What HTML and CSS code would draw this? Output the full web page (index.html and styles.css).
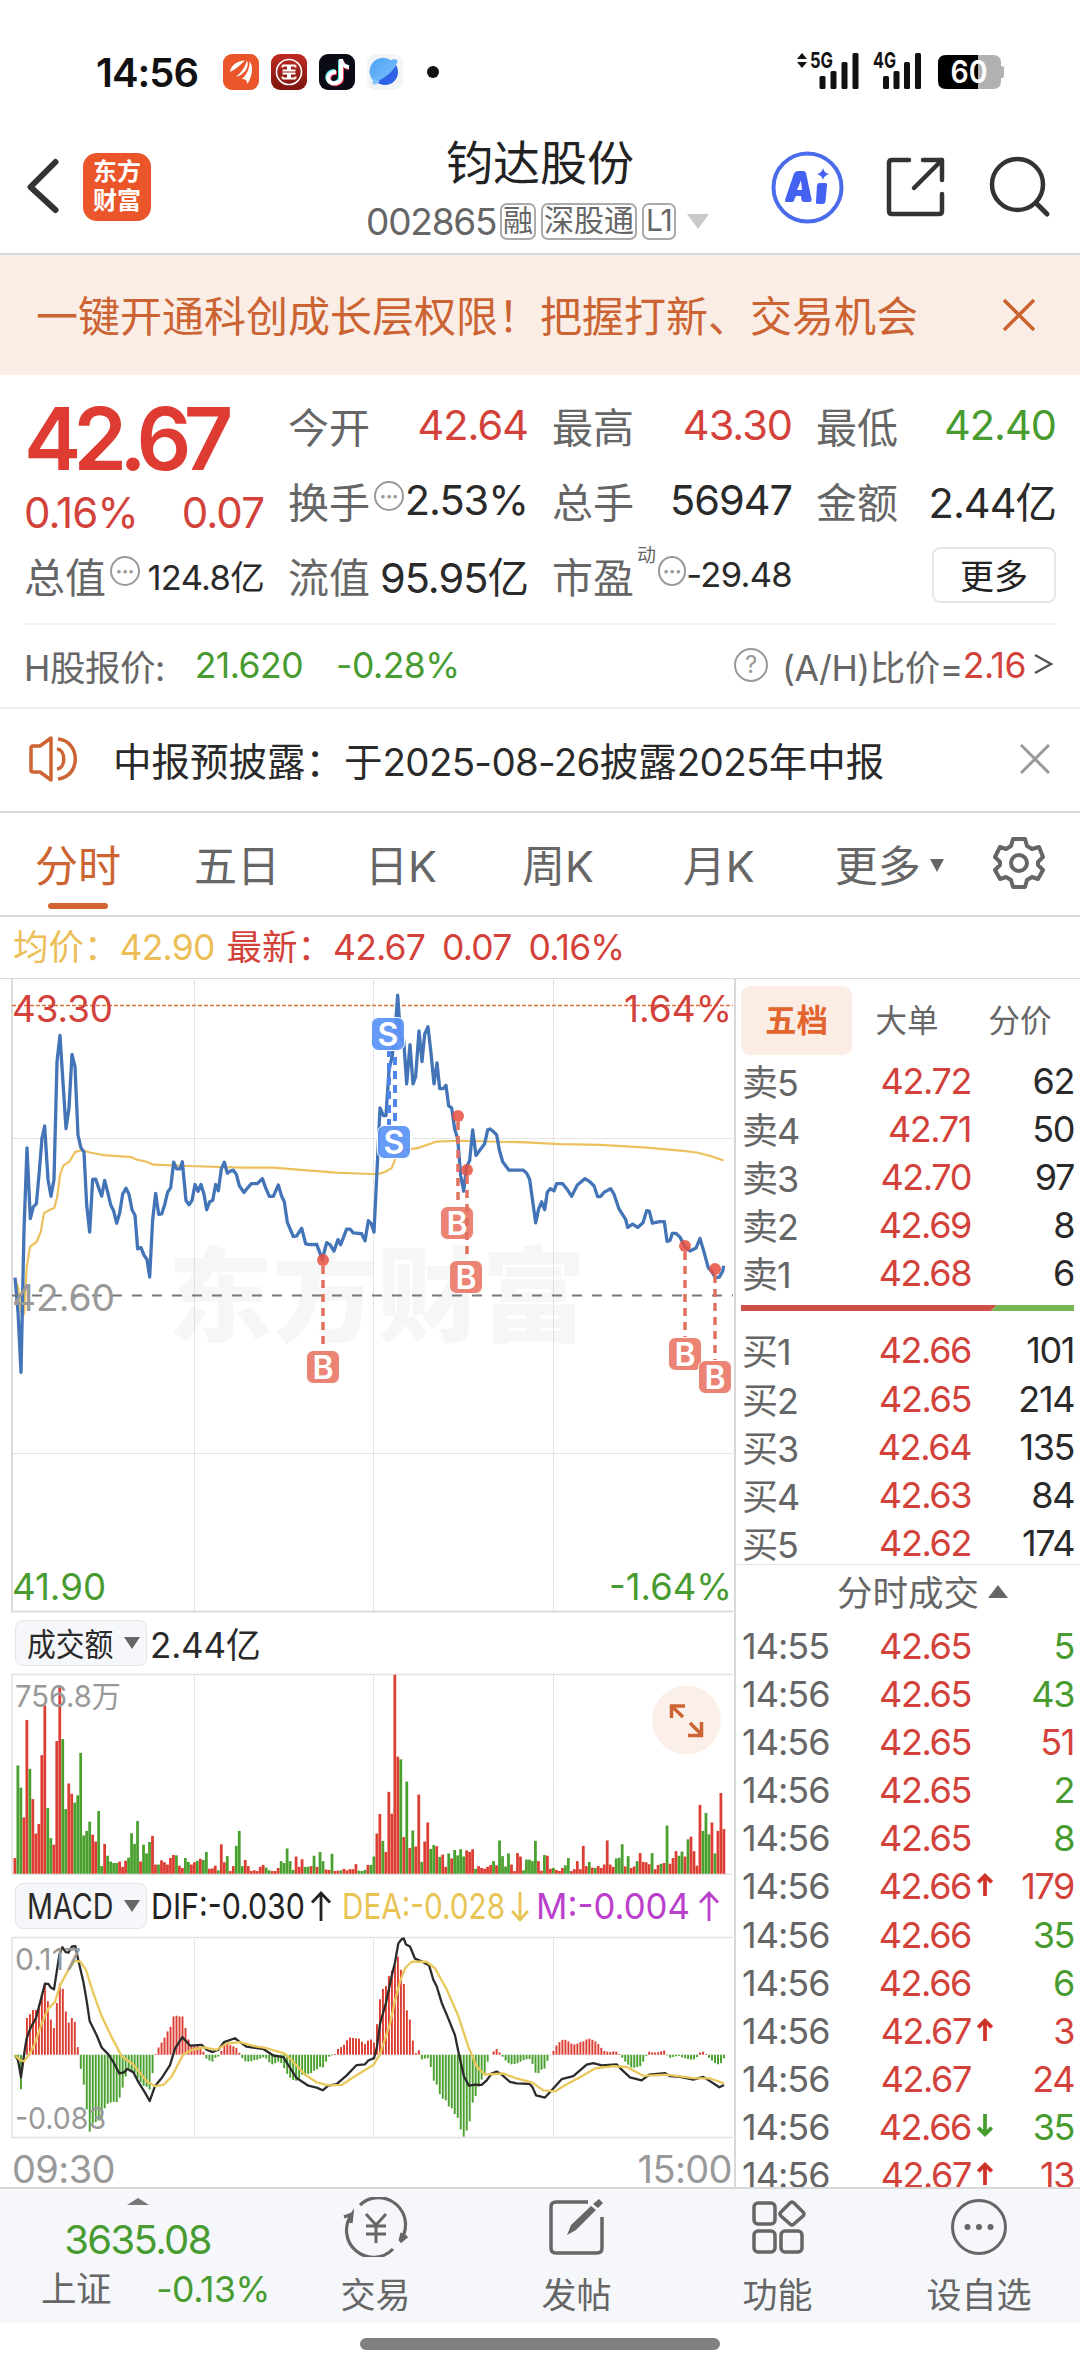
FILE: index.html
```html
<!DOCTYPE html>
<html lang="zh-CN">
<head>
<meta charset="UTF-8">
<title>钧达股份 002865</title>
<link rel="stylesheet" href="styles.css">
</head>
<body>

<div class="status">
  <span class="clock">14:56</span>
  <svg class="apps" width="224" height="36" viewBox="0 0 224 36">
    <defs>
      <linearGradient id="icbc" x1="0" y1="0" x2="0" y2="1"><stop offset="0" stop-color="#c02a22"/><stop offset="1" stop-color="#7c150f"/></linearGradient>
      <linearGradient id="planet" x1="0" y1="0" x2="1" y2="1"><stop offset="0" stop-color="#4aa3f5"/><stop offset="1" stop-color="#7fc0fb"/></linearGradient>
    </defs>
    <rect width="36" height="36" rx="9" fill="#ea552a"/>
    <path d="M7 18C8 11 14 7 22 6.500C18 10 15 14 7 18ZM13 23C19 18 22 13 24 6.500C27 13 21 21 13 23ZM19 25C25 19 27 13 26.500 7C31 13 29 22 24.500 30C24 26 22 25 19 25Z" fill="#fff"/>
    <rect x="48" width="36" height="36" rx="9" fill="url(#icbc)"/>
    <circle cx="66" cy="18" r="12.500" fill="none" stroke="#fff" stroke-width="1.600"/>
    <path d="M59.500 11.500H65V16.500H59.500M72.500 11.500H67V16.500H72.500M59.500 24.500H65V19.500H59.500M72.500 24.500H67V19.500H72.500M59.500 11.500V13.500M72.500 11.500V13.500M59.500 24.500V22.500M72.500 24.500V22.500" fill="none" stroke="#fff" stroke-width="2"/>
    <rect x="96" width="36" height="36" rx="9" fill="#0b0b15"/>
    <g fill="none" stroke-width="4">
      <path d="M112 17C105 17 103 22 105 26C108 31 117 29 117 23V6C118 10 121 12 125 13" stroke="#4be3e6"/>
      <path d="M114 19C107 18 105 24 107 28C111 32 119 30 119 24V7C120 11 123 14 126 14" stroke="#f0385a"/>
      <path d="M113 18C106 18 104 23 106 27C109 31 118 29.500 118 23.500V5C118 10 122 13 126 13" stroke="#fff"/>
    </g>
    <rect x="144" width="36" height="36" rx="9" fill="#f3f4f6"/>
    <circle cx="162" cy="18" r="13" fill="#2f62e6"/>
    <path d="M152 28A13 13 0 0 1 168 6.500C171 4 176 5 174 9C171 17 161 25 152 28Z" fill="url(#planet)"/>
    <path d="M151 25C148 28 149 32 154 30L157 27Z" fill="#7fc4fb"/>
    <circle cx="210" cy="18" r="6" fill="#111"/>
  </svg>
  <svg class="signals" width="210" height="38" viewBox="0 0 210 38">
    <path d="M0 7L5 1L10 7ZM0 10H10L5 16Z" fill="#111"/>
    <text x="13" y="16" class="net" textLength="23" lengthAdjust="spacingAndGlyphs">5G</text>
    <text x="76" y="16" class="net" textLength="23" lengthAdjust="spacingAndGlyphs">4G</text>
    <g fill="#111">
      <rect x="22.500" y="24" width="6" height="13" rx="1.500"/><rect x="33.500" y="19" width="6" height="18" rx="1.500"/><rect x="44.500" y="10" width="6" height="27" rx="1.500"/><rect x="55.500" y="1" width="6" height="36" rx="1.500"/>
      <rect x="86" y="24" width="6" height="13" rx="1.500"/><rect x="96.500" y="19" width="6" height="18" rx="1.500"/><rect x="107" y="10" width="6" height="27" rx="1.500"/><rect x="118" y="1" width="6" height="36" rx="1.500"/>
    </g>
    <path d="M181 3H196Q204 3 204 11V14Q207 14 207 16V24Q207 26 204 26V29Q204 37 196 37H181Z" fill="#b1b1b1"/>
    <path d="M149 3H181V37H149Q141 37 141 29V11Q141 3 149 3Z" fill="#000"/>
    <text x="153.500" y="30.500" class="batt" textLength="37" lengthAdjust="spacingAndGlyphs">60</text>
  </svg>
</div>

<header class="top">
  <svg class="back" width="34" height="58" viewBox="0 0 34 58"><path d="M29.500 4L4.500 29L29.500 52" fill="none" stroke="#333" stroke-width="6" stroke-linecap="round" stroke-linejoin="round"/></svg>
  <div class="logo">东方<br>财富</div>
  <div class="stock">
    <div class="name">钧达股份</div>
    <div class="code"><span class="num">002865</span><i>融</i><i>深股通</i><i class="l1">L1</i><b class="drop"></b></div>
  </div>
  <svg class="tools" width="284" height="76" viewBox="0 0 284 76">
    <circle cx="37.500" cy="37.500" r="34" fill="none" stroke="#4a6bea" stroke-width="4"/>
    <path d="M15 50Q14.500 52 17 52H22Q24 52 24.500 49L26 46H31L31.500 50Q32 52 34 52H39Q42 52 41.500 49L36 23Q35.500 21 33 21H28Q25 21 24 23.500ZM27 40L31 30.500L32 40ZM49 33H55Q57.500 33 57 35.500L55.500 51Q55 54 53 54H48Q45.500 54 46 51.500L47 35.500Q47.500 33 49 33ZM53 18Q54 23 59 24Q54 25.500 53 30Q52 25.500 47 24Q52 23 53 18Z" fill="#4461f2"/>
    <path d="M139 10H122Q119 10 119 13V61Q119 64 122 64H169Q172 64 172 61V44M153 10H172V30M172 10L144 38" fill="none" stroke="#333" stroke-width="4.500" stroke-linecap="round" stroke-linejoin="round"/>
    <circle cx="247.500" cy="34.500" r="25.500" fill="none" stroke="#333" stroke-width="4.500"/>
    <path d="M266 53L277 64" stroke="#333" stroke-width="5" stroke-linecap="round"/>
  </svg>
</header>

<div class="banner">
  <span>一键开通科创成长层权限！把握打新、交易机会</span>
  <svg width="32" height="32" viewBox="0 0 32 32"><path d="M1 1L31 31M31 1L1 31" stroke="#cb6332" stroke-width="3.500"/></svg>
</div>

<section class="quote">
  <div class="cell lead">
    <div class="price">42.67</div>
    <div class="chg red"><span>0.16%</span><span>0.07</span></div>
  </div>
  <div class="cell"><em>今开</em><span class="v red">42.64</span></div>
  <div class="cell"><em>最高</em><span class="v red">43.30</span></div>
  <div class="cell"><em>最低</em><span class="v green">42.40</span></div>
  <div class="cell"><em>换手</em><i class="info">•••</i><span class="v">2.53%</span></div>
  <div class="cell"><em>总手</em><span class="v">56947</span></div>
  <div class="cell"><em>金额</em><span class="v">2.44亿</span></div>
  <div class="cell"><em>总值</em><i class="info">•••</i><span class="v sm">124.8亿</span></div>
  <div class="cell"><em>流值</em><span class="v">95.95亿</span></div>
  <div class="cell"><em>市盈</em><sup>动</sup><i class="info">•••</i><span class="v sm">-29.48</span></div>
  <div class="cell"><button class="more">更多</button></div>
</section>

<div class="hk">
  <span>H股报价:</span><span class="green hkp">21.620</span><span class="green hkc">-0.28%</span>
  <span class="ah"><i class="q">?</i>(A/H)比价=<span class="red">2.16</span><svg width="20" height="24" viewBox="0 0 20 24"><path d="M1 2L17 11L1 20" fill="none" stroke="#555" stroke-width="2.500"/></svg></span>
</div>

<div class="notice">
  <svg width="52" height="46" viewBox="0 0 52 46" fill="none" stroke="#cd6433" stroke-width="3.500" stroke-linejoin="round">
    <path d="M3 12Q3 10 5 10H12L23 2V44L12 36H5Q3 36 3 34Z"/><path d="M29 13C38 14 38 32 29 33M30 3C53 5 53 41 30 43"/>
  </svg>
  <span class="msg">中报预披露：于<b>2025-08-26</b>披露<b>2025</b>年中报</span>
  <svg width="30" height="30" viewBox="0 0 30 30"><path d="M1 1L29 29M29 1L1 29" stroke="#999" stroke-width="3"/></svg>
</div>

<nav class="tabs">
  <a class="on">分时</a><a>五日</a><a>日K</a><a>周K</a><a>月K</a><a>更多<b></b></a>
  <svg width="52" height="54" viewBox="0 0 52 54" fill="none" stroke="#666" stroke-width="4" stroke-linejoin="round">
    <path d="M20 3H32L34 10L39 13L46 11L50 21L45 26V29L50 34L45 43L39 41L34 44L32 51H20L18 44L13 41L7 43L2 34L7 29V26L2 21L7 11L13 13L18 10Z"/><circle cx="26" cy="27" r="8"/>
  </svg>
</nav>

<div class="avg"><span class="yellow">均价：<b>42.90</b></span><span class="red">最新：<b>42.67</b><b>0.07</b><b>0.16%</b></span></div>

<main>
  <div class="charts">
    <svg class="plot" width="735" height="634" viewBox="0 0 735 634">
      <text x="168" y="355" class="mark" textLength="418" lengthAdjust="spacingAndGlyphs">东方财富</text>
      <path d="M194.500 1V632M373.500 1V632M553.500 1V632M12 159.500H733M12 474.500H733" class="dots"/>
      <path d="M12 0V632.500H733" class="frame"/>
      <path d="M12 26.500H733" stroke="#d9703f" stroke-width="1.500" stroke-dasharray="4 2"/>
      <g transform="translate(0 -10) scale(.33333 .42091)" class="series">
        <polyline class="mean" points="45,735 54,755 63,815 72,820 80,710 90,660 110,648 122,625 132,580 150,572 163,568 172,540 180,490 190,467 208,458 225,435 245,430 270,436 310,442 395,447 410,453 440,458 460,465 560,468 730,472 820,472 930,479 1010,484 1110,487 1140,486 1155,482 1175,473 1192,440 1210,431 1255,425 1310,410 1380,408 1580,412 1680,416 1800,418 1930,424 2050,432 2090,436 2130,444 2171,455"/>
        <polyline class="last" points="45,733 54,815 63,958 72,620 81,425 91,593 100,565 109,558 118,480 126,402 134,373 144,500 153,540 162,500 171,220 180,158 189,270 198,379 207,330 216,203 225,232 234,395 243,425 252,435 260,560 269,625 278,500 287,499 296,520 305,540 314,502 323,530 332,560 341,575 350,604 359,580 368,535 378,521 387,535 396,572 405,585 413,665 423,662 432,680 441,690 449,732 458,595 467,533 476,583 485,582 494,560 503,530 512,520 521,459 530,475 540,475 547,458 558,550 567,560 576,550 585,512 594,528 603,512 612,535 620,572 629,553 638,550 647,512 655,527 664,475 673,459 682,485 691,480 700,478 709,488 718,515 732,531 745,518 754,510 772,510 787,498 797,520 808,540 820,540 835,513 845,540 853,553 862,602 880,636 890,634 905,616 917,653 930,655 950,654 967,690 980,650 990,655 1002,670 1014,643 1022,655 1040,618 1050,618 1060,627 1085,629 1095,646 1105,598 1114,605 1122,625 1131,480 1140,330 1150,348 1158,348 1167,240 1177,205 1185,150 1193,62 1202,165 1211,168 1220,273 1230,180 1239,273 1247,255 1257,147 1266,220 1274,155 1284,137 1293,200 1302,273 1311,223 1319,284 1330,284 1338,276 1346,325 1355,330 1364,380 1373,403 1382,490 1391,528 1400,470 1409,455 1418,382 1428,443 1440,430 1454,415 1463,382 1470,380 1480,386 1490,394 1498,430 1508,458 1527,478 1570,478 1580,485 1589,500 1607,603 1616,570 1625,553 1634,572 1642,530 1651,522 1662,527 1670,510 1688,510 1700,522 1715,540 1732,513 1755,498 1770,506 1782,515 1793,541 1802,540 1813,530 1832,522 1842,535 1857,570 1877,595 1883,614 1898,606 1913,614 1929,603 1940,574 1948,575 1957,604 1980,600 1993,600 2001,647 2010,645 2017,628 2028,628 2040,637 2055,660 2070,670 2088,663 2100,640 2113,675 2125,710 2135,718 2146,734 2158,732 2168,718 2171,705"/>
      </g>
      <path d="M12 316.500H733" stroke="#777" stroke-width="2" stroke-dasharray="10 10"/>
      <g id="trades"></g>
      <text x="12" y="43" class="ax red" textLength="101" lengthAdjust="spacingAndGlyphs">43.30</text>
      <text x="12" y="332" class="ax gray" textLength="103" lengthAdjust="spacingAndGlyphs">42.60</text>
      <text x="12" y="621" class="ax green" textLength="94" lengthAdjust="spacingAndGlyphs">41.90</text>
      <text x="624" y="43" class="ax red" textLength="108" lengthAdjust="spacingAndGlyphs">1.64%</text>
      <text x="609" y="621" class="ax green" textLength="123" lengthAdjust="spacingAndGlyphs">-1.64%</text>
    </svg>

    <div class="ind"><span class="pick"><s>成交额</s><b></b></span><span class="amt">2.44亿</span></div>

    <svg class="plot" width="735" height="202" viewBox="0 0 735 202">
      <path d="M194.500 1V201M373.500 1V201M553.500 1V201" class="dots"/>
      <path d="M733 1.500H12V201.500H733" class="thin"/>
      <g id="volume" transform="translate(0 -74) scale(.33333 .38265)"></g>
      <text x="15" y="34" class="lab" textLength="106" lengthAdjust="spacingAndGlyphs">756.8万</text>
      <circle cx="686.500" cy="47" r="34.500" fill="#fbf0e9"/>
      <path d="M671.500 45V33H685M672 33.500L683 44M690 50L701 61M688 62.500H701.500V49" fill="none" stroke="#cd6433" stroke-width="3.500"/>
    </svg>

    <div class="ind macd">
      <span class="pick"><s class="en">MACD</s><b></b></span>
      <svg width="580" height="46" viewBox="0 0 580 46">
        <g class="val">
          <text x="4" y="36" fill="#222" textLength="154" lengthAdjust="spacingAndGlyphs">DIF:-0.030</text>
          <text x="195" y="36" fill="#e8c454" textLength="163" lengthAdjust="spacingAndGlyphs">DEA:-0.028</text>
          <text x="389" y="36" fill="#ba40cb" textLength="154" lengthAdjust="spacingAndGlyphs">M:-0.004</text>
        </g>
        <g fill="none" stroke-width="2.800">
          <path d="M174 38V10M165 19.500L174 10L183 19.500" stroke="#222"/>
          <path d="M373 9V37M365 28L373 37L381 28" stroke="#e8c454"/>
          <path d="M562 38V10M553 19.500L562 10L571 19.500" stroke="#ba40cb"/>
        </g>
      </svg>
    </div>

    <svg class="plot" width="735" height="203" viewBox="0 0 735 203">
      <path d="M194.500 1V201M373.500 1V201M553.500 1V201" class="dots"/>
      <path d="M733 1.500H12V201.500H733" class="thin"/>
      <g transform="translate(0 -337) scale(.33333 .38265)" class="series">
        <g id="hist"></g>
        <polyline class="dif" points="45,1192 54,1205 63,1250 74,1180 80,1148 92,1120 108,1095 120,1055 135,1005 145,1006 152,1015 162,1020 170,975 178,930 187,910 197,923 206,924 216,908 226,907 234,940 250,1000 260,1050 269,1103 290,1140 305,1172 325,1190 340,1210 358,1240 372,1237 382,1228 400,1237 415,1262 435,1290 449,1312 465,1273 485,1252 510,1218 525,1175 547,1145 570,1167 605,1165 620,1178 638,1184 655,1178 672,1158 705,1148 720,1158 740,1170 790,1176 820,1193 850,1197 870,1225 890,1252 925,1272 950,1277 968,1284 985,1272 1010,1268 1040,1245 1070,1218 1095,1216 1105,1206 1122,1200 1131,1170 1140,1110 1158,1055 1175,985 1185,950 1195,900 1205,889 1211,887 1218,903 1230,908 1245,940 1265,947 1287,957 1300,995 1310,1012 1325,1055 1342,1090 1365,1140 1378,1195 1392,1248 1407,1272 1425,1269 1445,1270 1460,1258 1475,1240 1490,1235 1505,1243 1530,1262 1550,1266 1588,1267 1597,1275 1608,1297 1635,1303 1655,1284 1685,1255 1720,1247 1760,1217 1780,1213 1805,1219 1850,1216 1865,1230 1890,1250 1925,1258 1948,1243 1995,1239 2010,1247 2040,1249 2080,1256 2110,1249 2130,1260 2158,1276 2172,1270"/>
        <polyline class="dea" points="45,1192 60,1205 72,1208 90,1188 105,1160 125,1110 145,1070 165,1053 180,1010 205,970 225,945 242,948 258,970 280,1030 305,1090 335,1145 365,1195 400,1217 440,1260 465,1273 490,1270 515,1248 550,1190 575,1179 610,1172 650,1178 680,1162 720,1158 760,1168 800,1174 855,1188 880,1210 915,1243 950,1263 985,1271 1025,1270 1060,1250 1120,1218 1140,1190 1170,1110 1185,1050 1200,1000 1215,965 1235,948 1280,948 1305,965 1340,1020 1375,1090 1405,1170 1430,1222 1455,1243 1510,1240 1550,1253 1595,1263 1630,1284 1665,1287 1700,1268 1740,1250 1785,1227 1840,1221 1880,1223 1930,1246 2000,1243 2080,1252 2130,1253 2172,1266"/>
      </g>
      <text x="15" y="34" class="lab" textLength="66" lengthAdjust="spacingAndGlyphs">0.117</text>
      <text x="15" y="193" class="lab" textLength="91" lengthAdjust="spacingAndGlyphs">-0.083</text>
    </svg>

    <div class="times"><span>09:30</span><span>15:00</span></div>
  </div>

  <aside class="book">
    <div class="seg"><b>五档</b><span>大单</span><span>分价</span></div>
    <div id="asks"></div>
    <svg class="ratio" width="333" height="6" viewBox="0 0 333 6"><path d="M0 0H256L250 6H0Z" fill="#cf5046"/><path d="M256 0H333V6H250Z" fill="#76b657"/></svg>
    <div id="bids"></div>
    <div class="ticks-h">分时成交<b></b></div>
    <div id="ticks"></div>
  </aside>
</main>

<footer class="bar">
  <div class="index"><b class="up"></b><div class="green pt">3635.08</div><div class="ix"><span>上证</span><span class="green">-0.13%</span></div></div>
  <div class="item">
    <svg width="66" height="60" viewBox="0 0 66 60" fill="none" stroke="#666" stroke-width="3.200">
      <path d="M17 8A27 27 0 0 1 57 44L59 36M57 45L64 39M50 52A27 27 0 0 1 9 17L8 26M9 17L1 20"/><path d="M23 17L33 28L43 17M33 28V46M23 29H43M23 37H43" stroke-width="3"/>
    </svg>交易</div>
  <div class="item">
    <svg width="60" height="60" viewBox="0 0 60 60" fill="none" stroke="#666" stroke-width="3.500">
      <path d="M41 5H9Q4 5 4 10V51Q4 56 9 56H50Q55 56 55 51V20"/><path d="M20 38L24 28L44 9L49 13L29 33ZM46 7L52 2L56 6L51 11Z" fill="#666" stroke="none"/>
    </svg>发帖</div>
  <div class="item">
    <svg width="56" height="60" viewBox="0 0 56 60" fill="none" stroke="#666" stroke-width="3.500">
      <rect x="4" y="6" width="21" height="21" rx="4"/><rect x="4" y="34" width="21" height="21" rx="4"/><rect x="31" y="34" width="21" height="21" rx="4"/><path d="M40 6Q42 4 44 6L53 15Q55 17 53 19L44 27Q42 29 40 27L31 19Q29 17 31 15Z"/>
    </svg>功能</div>
  <div class="item">
    <svg width="60" height="60" viewBox="0 0 60 60"><circle cx="30" cy="30" r="26.500" fill="none" stroke="#666" stroke-width="3"/><g fill="#666"><circle cx="18.500" cy="30" r="3"/><circle cx="30" cy="30" r="3"/><circle cx="41.500" cy="30" r="3"/></g></svg>设自选</div>
</footer>
<div class="home"></div>

<script src="chart.js"></script>
</body>
</html>
```
FILE: styles.css
```css
* {
    box-sizing: border-box;
}
body {
    margin: 0;
    width: 1080px;
    height: 2373px;
    overflow: hidden;
    background: #fff;
    color: #2a2a2a;
    font-family: "Inter", "Noto Sans CJK SC", sans-serif;
    font-size: 36px;
}
i, em, s {
    font-style: normal;
    text-decoration: none;
}
b {
    font-weight: 400;
}
.red { color: #d3423a; }
.green { color: #489b30; }
.yellow { color: #ecbe57; }

/* system status bar */
.status {
    height: 144px;
    padding: 0 73px 0 96px;
    display: flex;
    align-items: center;
}
.clock {
    width: 127px;
    font-size: 40px;
    font-weight: 600;
    letter-spacing: -1px;
    color: #111;
}
.signals {
    margin-left: auto;
    margin-top: -2px;
    overflow: visible;
}
.net {
    font-size: 22px;
    font-weight: 700;
    fill: #111;
}
.batt {
    font-size: 31px;
    font-weight: 600;
    fill: #fff;
}

/* title bar */
.top {
    height: 111px;
    display: flex;
    align-items: flex-start;
    border-bottom: 2px solid #d8d8d8;
    padding-left: 26px;
}
.back {
    margin-top: 14px;
}
.logo {
    width: 68px;
    height: 68px;
    margin: 9px 0 0 23px;
    padding-top: 4px;
    border-radius: 14px;
    background: #ea552a;
    color: #fff;
    font-size: 24px;
    font-weight: 700;
    line-height: 29px;
    text-align: center;
}
.stock {
    width: 360px;
    margin-left: 209px;
    text-align: center;
}
.name {
    height: 56px;
    margin-top: -9px;
    line-height: 56px;
    font-size: 47px;
    color: #222;
}
.code {
    display: flex;
    align-items: center;
    height: 38px;
    margin-top: 11px;
    padding-left: 6px;
    color: #666;
}
.code .num {
    width: 134px;
    font-size: 37px;
    letter-spacing: -1.2px;
    text-align: left;
}
.code i {
    height: 37px;
    margin-right: 5px;
    padding: 0 1px;
    border: 2px solid #aaa;
    border-radius: 7px;
    font-size: 30px;
    line-height: 31px;
}
.code .l1 {
    letter-spacing: -1px;
    padding: 0 2px;
}
.drop {
    margin-left: 6px;
    border: 11px solid transparent;
    border-top: 15px solid #c9c9c9;
    border-bottom: 0;
}
.tools {
    margin-left: 50px;
    margin-top: 6px;
}

.banner {
    height: 120px;
    padding: 0 45px 0 36px;
    display: flex;
    align-items: center;
    justify-content: space-between;
    background: #faede5;
    color: #cb6332;
    font-size: 42px;
}
.banner span {
    padding-bottom: 3px;
}

/* quote numbers */
.quote {
    display: grid;
    grid-template-columns: 240px 240px 240px 240px;
    grid-template-rows: 75px 75px 75px;
    column-gap: 24px;
    height: 250px;
    margin: 0 24px;
    padding-top: 12px;
    border-bottom: 2px solid #f2f2f2;
}
.cell {
    display: flex;
    align-items: center;
    white-space: nowrap;
}
.cell em {
    font-size: 41px;
    color: #666;
}
.cell .v {
    margin-left: auto;
    font-size: 41.5px;
    letter-spacing: -1px;
}
.cell .sm {
    font-size: 34.5px;
    letter-spacing: -.7px;
}
.lead {
    grid-row: span 2;
    display: block;
    padding-top: 2px;
}
.price {
    height: 100px;
    line-height: 100px;
    font-size: 86px;
    font-weight: 600;
    letter-spacing: -7.8px;
    color: #de3b32;
}
.chg {
    display: flex;
    justify-content: space-between;
    line-height: 48px;
    font-size: 42px;
    letter-spacing: -.9px;
}
.info, .q {
    width: 30px;
    height: 30px;
    margin-left: 4px;
    margin-top: -8px;
    border: 2px solid #999;
    border-radius: 50%;
    color: #999;
    font-size: 11px;
    line-height: 26px;
    text-align: center;
}
.cell sup {
    font-size: 19px;
    margin: -38px -2px 0 3px;
    color: #666;
    line-height: 20px;
}
.more {
    margin-left: auto;
    width: 124px;
    height: 56px;
    padding: 0;
    background: #fff;
    border: 2px solid #e6e6e6;
    border-radius: 8px;
    font: 34px/48px "Noto Sans CJK SC", sans-serif;
    color: #222;
}

.hk {
    height: 84px;
    padding: 0 26px 2px 24px;
    display: flex;
    align-items: center;
    border-bottom: 2px solid #eee;
    font-size: 35.5px;
    letter-spacing: -.5px;
    color: #666;
}
.hkp { margin-left: 30px; }
.hkc { margin-left: 33px; }
.ah {
    display: flex;
    align-items: center;
    margin-left: auto;
}
.ah svg {
    margin-left: 8px;
}
.q {
    width: 34px;
    height: 34px;
    margin: 0 14px 0 0;
    font-size: 24px;
    line-height: 30px;
}

.notice {
    height: 104px;
    padding: 0 30px 2px 28px;
    display: flex;
    align-items: center;
    border-bottom: 2px solid #d8d8d8;
    font-size: 38.5px;
}
.msg {
    margin-left: 33px;
    margin-right: auto;
}
.msg b {
    letter-spacing: -.7px;
}

/* period tabs */
.tabs {
    height: 104px;
    padding: 0 35px 0 35px;
    display: flex;
    align-items: center;
    border-bottom: 2px solid #d8d8d8;
    font-size: 43px;
    color: #666;
}
.tabs a {
    height: 102px;
    line-height: 106px;
    margin-right: 73px;
    white-space: nowrap;
}
.tabs a:nth-child(2), .tabs a:nth-child(3) {
    margin-right: 85px;
}
.tabs a:nth-child(4) {
    margin-right: 89px;
}
.tabs a:nth-child(5) {
    margin-right: 80px;
}
.tabs .on {
    color: #cd6433;
}
.tabs .on::after {
    content: "";
    display: block;
    width: 60px;
    height: 6px;
    margin: -16px auto 0;
    border-radius: 3px;
    background: #d2622f;
}
.tabs a b {
    display: inline-block;
    margin-left: 9px;
    vertical-align: 10px;
    border: 7px solid transparent;
    border-top: 13px solid #666;
    border-bottom: 0;
}
.tabs a:nth-child(6) {
    margin-right: 0;
}
.tabs svg {
    margin-left: auto;
    margin-top: -3px;
}

.avg {
    height: 62px;
    padding-left: 13px;
    border-bottom: 1px solid #d8d8d8;
    line-height: 62px;
    font-size: 35.5px;
}
.avg b {
    letter-spacing: -.8px;
    margin-right: 17px;
}
.avg .yellow b {
    margin-right: 12px;
}

main {
    display: grid;
    grid-template-columns: 734px 346px;
    height: 1208px;
    overflow: hidden;
}

/* charts */
.charts {
    overflow: hidden;
}
.plot {
    display: block;
}
.frame { fill: none; stroke: #dcdcdc; stroke-width: 2; }
.thin { fill: none; stroke: #e2e2e2; stroke-width: 1.5; }
.dots { fill: none; stroke: #d2d2d2; stroke-width: 1; stroke-dasharray: 1.5 1; }
.mark { font-size: 103px; font-weight: 900; fill: #f6f6f6; }
.series polyline {
    fill: none;
    stroke-linejoin: round;
    vector-effect: non-scaling-stroke;
}
.last { stroke: #4374b7; stroke-width: 3.3; }
.mean { stroke: #ecc15d; stroke-width: 2.2; }
.dif { stroke: #2b2b2b; stroke-width: 2.3; }
.dea { stroke: #e9c75a; stroke-width: 2.3; }
.ax { font-size: 37px; }
.ax.red { fill: #d3423a; }
.ax.green { fill: #489b30; }
.ax.gray { fill: #999; }
.lab { font-size: 30px; fill: #999; }
.tag { font-size: 32px; font-weight: 600; fill: #fff; text-anchor: middle; }
.val { font-size: 36px; }

.ind {
    display: flex;
    align-items: center;
    height: 60px;
    padding-left: 15px;
}
.ind.macd {
    height: 61px;
}
.pick {
    width: 132px;
    height: 46px;
    padding-left: 11px;
    display: flex;
    align-items: center;
    border: 1px solid #e3e5e8;
    border-radius: 8px;
    background: #f6f7fa;
}
.pick s {
    width: 97px;
    margin-top: -2px;
    font-size: 32px;
    white-space: nowrap;
    transform: scaleX(.9);
    transform-origin: left;
}
.pick .en {
    margin-top: 0;
    font-size: 35px;
    transform: scaleX(.82);
}
.pick b {
    border: 8px solid transparent;
    border-top: 12px solid #666;
    border-bottom: 0;
}
.amt {
    margin: -2px 0 0 3px;
    font-size: 35px;
    letter-spacing: -.2px;
}
.times {
    height: 50px;
    padding: 2px 2px 0 12px;
    display: flex;
    justify-content: space-between;
    line-height: 56px;
    font-size: 38px;
    letter-spacing: -.6px;
    color: #999;
}

/* order book */
.book {
    border-left: 2px solid #d8d8d8;
    background: #fff;
    overflow: hidden;
}
.seg {
    display: grid;
    grid-template-columns: 111px 110px 112px;
    margin: 7px 0 2px 5px;
    height: 66px;
    line-height: 69px;
    font-size: 31.5px;
    text-align: center;
    color: #666;
}
.seg b {
    background: #fcede4;
    border-radius: 9px;
    color: #e2642f;
    font-weight: 700;
}
.seg span:last-child {
    padding-left: 4px;
}
.row {
    display: grid;
    grid-template-columns: 120px 109px 26px 77px;
    height: 48.1px;
    padding-left: 6px;
    align-items: center;
    letter-spacing: -1.4px;
}
.row span {
    padding-bottom: 2px;
    color: #666;
    font-size: 36px;
    letter-spacing: -1px;
}
#ticks .row span {
    padding-bottom: 0;
}
.row .p, .row .n {
    text-align: right;
    white-space: nowrap;
}
.row svg {
    display: block;
    margin-left: 5px;
    margin-top: -3px;
}
.ratio {
    display: block;
    margin: 11px 0 12px 5px;
}
.ticks-h {
    height: 58px;
    border-top: 1px solid #e4e4e4;
    line-height: 57px;
    padding-left: 101px;
    font-size: 35.5px;
    color: #666;
}
.ticks-h b {
    display: inline-block;
    margin-left: 9px;
    vertical-align: 8px;
    border: 10.5px solid transparent;
    border-bottom: 13px solid #666;
    border-top: 0;
}

/* bottom bar */
.bar {
    display: grid;
    grid-template-columns: 275px 201px 201px 201px 202px;
    height: 136px;
    background: #f5f7fa;
    border-top: 2px solid #d8d8d8;
    color: #666;
}
.index {
    padding-top: 9px;
    text-align: center;
}
.up {
    display: block;
    width: 0;
    margin: 0 auto;
    border: 11px solid transparent;
    border-bottom: 7px solid #777;
    border-top: 0;
}
.pt {
    height: 66px;
    line-height: 70px;
    font-size: 40px;
    letter-spacing: -1.6px;
}
.ix {
    display: flex;
    justify-content: space-between;
    padding: 0 5px 0 41px;
    margin-top: -5px;
    line-height: 48px;
    font-size: 35.5px;
    letter-spacing: -.4px;
}
.item {
    display: flex;
    flex-direction: column;
    align-items: center;
    padding-top: 8px;
    font-size: 35px;
    line-height: 62px;
}
.item svg {
    height: 60px;
    flex: none;
    margin-bottom: 7px;
}
.home {
    width: 360px;
    height: 12px;
    margin: 15px auto 0;
    border-radius: 6px;
    background: #808080;
}
```
FILE: chart.js
```js
const RED = "#dc3e34", GREEN = "#4aa02f";

// one entry per minute, positive = up minute, negative = down minute
const vol = [41,-283,-225,147,402,-274,195,105,130,310,440,-172,-93,76,347,488,-352,-169,236,209,-186,-205,-316,-100,-112,-136,102,84,-164,-20,
78,-47,-32,-28,-28,32,18,34,-42,-106,-78,-138,32,-76,-53,-83,99,24,-24,35,30,24,41,49,-48,21,15,-41,-31,24,30,-34,39,-36,-57,13,14,21,-9,77,30,-46,7,20,
-73,-112,-20,36,20,7,9,7,18,23,-16,-9,7,7,15,-33,-28,-66,-33,-10,45,18,38,-18,-18,20,-47,18,-57,-33,11,10,-52,7,8,-9,13,9,12,12,25,-8,-7,-10,23,-23,-45,
105,156,-86,57,214,157,520,306,-299,96,-241,67,-113,71,207,-31,84,134,-65,-75,72,-44,50,18,-53,40,-62,-48,-64,-45,61,57,64,-13,20,15,13,18,23,-33,22,-87,
-46,-19,-53,24,7,54,45,-9,-37,-37,-33,-86,33,8,-49,47,13,-15,10,7,15,-22,-41,7,12,33,12,73,20,-31,16,-15,20,15,24,87,24,18,-40,-42,-77,19,-46,15,19,-33,
54,31,30,25,-54,12,23,-26,28,-126,26,41,59,-47,-58,45,-90,97,59,21,180,-112,-159,-103,134,-53,112,211,117];

const macd = [0,-20,-90,-15,96,106,117,117,132,160,183,140,92,70,135,186,172,113,84,96,86,20,-37,-78,-143,-201,-180,-176,-172,-166,-140,-128,-125,-123,-124,-112,
-86,-57,-40,-45,-48,-62,-72,-81,-84,-91,-48,2,19,32,45,61,73,100,102,100,100,70,40,25,22,22,20,8,-10,-15,-18,-8,-5,10,30,28,25,22,18,5,-9,-17,-18,-17,-14,
-13,-10,-7,-10,-20,-25,-22,-18,-22,-35,-50,-60,-66,-68,-62,-52,-55,-50,-48,-42,-38,-32,-33,-18,-5,-2,2,15,20,26,38,45,44,43,42,34,28,37,40,32,80,145,172,
180,206,220,234,256,222,185,116,92,37,4,12,-12,-10,-9,-32,-68,-78,-103,-115,-119,-135,-140,-155,-165,-195,-214,-198,-174,-125,-108,-84,-65,-50,-18,0,9,15,
6,-5,-15,-22,-25,-24,-22,-18,-14,-12,-11,-24,-47,-48,-39,-36,-16,-1,10,24,33,39,39,35,29,27,29,33,35,40,42,39,35,28,18,10,8,7,9,8,2,-8,-18,-26,-33,-34,-32,
-30,-18,-3,8,6,6,7,9,11,-2,-8,-6,-4,-3,-7,-9,-11,-13,-12,-6,6,8,2,-8,-15,-22,-25,-22,-9];

const X0 = 45, STEP = 8.975;

document.getElementById("volume").innerHTML = vol.map((v, i) => {
  const h = Math.abs(v);
  return `<rect x="${X0 + i * STEP - 4.5}" y="${718 - h}" width="8.3" height="${h}" fill="${v > 0 ? RED : GREEN}"/>`;
}).join("");

document.getElementById("hist").innerHTML = macd.map((v, i) =>
  `<rect x="${X0 + i * STEP - 3}" y="${v > 0 ? 1191 - v : 1191}" width="5.8" height="${Math.abs(v)}" fill="${v > 0 ? RED : GREEN}"/>`
).join("");

// buy / sell markers: type, x, dot y, badge centre x, badge centre y
const trades = [
  ["S", 389, 0, 388, 55], ["S", 395, 0, 394, 163],
  ["B", 458, 137, 457, 244], ["B", 467, 191, 466, 298],
  ["B", 323, 281, 323, 388], ["B", 685, 267, 685, 375], ["B", 715, 290, 715, 398]
];
let out = `<path d="M389 70V152M395 50V150" stroke="#4f86ee" stroke-width="4" stroke-dasharray="8 6"/>`;
for (const [t, x, dot, bx, by] of trades) {
  if (t === "B") {
    out += `<path d="M${x} ${dot + 6}V${by - 16}" stroke="#e0705f" stroke-width="3.5" stroke-dasharray="8 6"/>`;
    out += `<circle cx="${x}" cy="${dot}" r="6" fill="#e8503f" opacity=".85"/>`;
  }
  out += `<rect x="${bx - 16.5}" y="${by - 16.5}" width="33" height="33" rx="7" fill="${t === "B" ? "#ea7b69" : "#5b93f8"}" fill-opacity=".93" stroke="#fff" stroke-width="1"/>`;
  out += `<text x="${bx}" y="${by + 11.5}" class="tag">${t}</text>`;
}
document.getElementById("trades").innerHTML = out;

const arrows = {
  up: `<svg width="18" height="25" viewBox="0 0 17 24"><path d="M8.500 23V3M2 10L8.500 3.500L15 10" fill="none" stroke="#cf3226" stroke-width="3.600"/></svg>`,
  down: `<svg width="18" height="25" viewBox="0 0 17 24"><path d="M8.500 1V21M2 14L8.500 20.500L15 14" fill="none" stroke="#489b30" stroke-width="3.600"/></svg>`
};
const row = (label, price, n, cls, arrow) =>
  `<div class="row"><span>${label}</span><b class="p red">${price}</b><div>${arrows[arrow] || ""}</div><b class="n ${cls}">${n}</b></div>`;

const asks = [["卖5", "42.72", 62], ["卖4", "42.71", 50], ["卖3", "42.70", 97], ["卖2", "42.69", 8], ["卖1", "42.68", 6]];
const bids = [["买1", "42.66", 101], ["买2", "42.65", 214], ["买3", "42.64", 135], ["买4", "42.63", 84], ["买5", "42.62", 174]];
document.getElementById("asks").innerHTML = asks.map(r => row(...r, "")).join("");
document.getElementById("bids").innerHTML = bids.map(r => row(...r, "")).join("");

const ticks = [
  ["14:55", "42.65", 5, "green"], ["14:56", "42.65", 43, "green"], ["14:56", "42.65", 51, "red"],
  ["14:56", "42.65", 2, "green"], ["14:56", "42.65", 8, "green"], ["14:56", "42.66", 179, "red", "up"],
  ["14:56", "42.66", 35, "green"], ["14:56", "42.66", 6, "green"], ["14:56", "42.67", 3, "red", "up"],
  ["14:56", "42.67", 24, "red"], ["14:56", "42.66", 35, "green", "down"], ["14:56", "42.67", 13, "red", "up"]
];
document.getElementById("ticks").innerHTML = ticks.map(t => row(...t)).join("");
```
